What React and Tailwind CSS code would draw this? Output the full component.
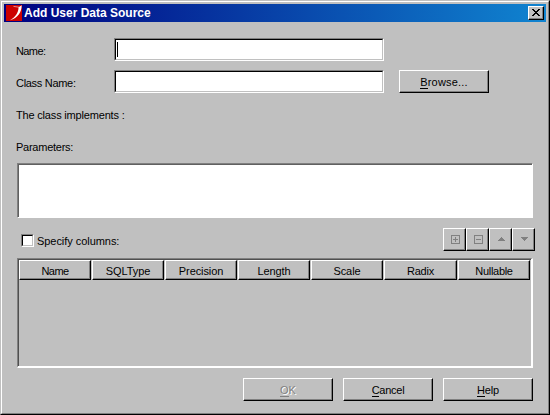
import React from "react";

const raised =
  "border border-t-white border-l-white border-r-black border-b-black shadow-[inset_-1px_-1px_0_#808080]";

function Label({ className = "", children }) {
  return <div className={`h-4 leading-4 whitespace-pre ${className}`}>{children}</div>;
}

function TextField({ focused }) {
  return (
    <div className="h-[23px] w-[270px] border border-t-[#808080] border-l-[#808080] border-r-white border-b-white bg-white">
      <div className="h-full border border-t-black border-l-black border-r-[#c0c0c0] border-b-[#c0c0c0] pt-[2px] pl-px">
        {focused && <div className="h-[15px] w-px bg-black" />}
      </div>
    </div>
  );
}

function Button({ hot, rest, disabled, className = "" }) {
  return (
    <button
      className={`flex h-[23px] w-[90px] items-center justify-center ${raised} ${className} ${
        disabled ? "text-[#808080] [text-shadow:1px_1px_0_#fff]" : "text-black"
      }`}
    >
      <span className="leading-[14px]">
        <span className={`inline-block h-[14px] border-b ${disabled ? "border-[#808080]" : "border-black"}`}>
          {hot}
        </span>
        {rest}
      </span>
    </button>
  );
}

function ToolButton({ children }) {
  return (
    <button className={`flex h-[23px] w-[23px] items-center pl-[7px] ${raised}`}>
      <svg width="9" height="9" viewBox="0 0 9 9" shapeRendering="crispEdges" fill="#808080">
        {children}
      </svg>
    </button>
  );
}

const columns = [
  ["Name", "w-[72px] tracking-[-0.6px]"],
  ["SQLType", "w-[72px] tracking-[-0.1px]"],
  ["Precision", "w-[72px] tracking-[-0.1px]"],
  ["Length", "w-[72px] tracking-[-0.1px]"],
  ["Scale", "w-[72px] tracking-[-0.1px]"],
  ["Radix", "w-[73px] tracking-[-0.2px]"],
  ["Nullable", "w-[72px] tracking-[-0.3px]"],
];

export default function App() {
  return (
    <div className="h-[415px] w-[550px] overflow-hidden border border-t-[#c0c0c0] border-l-[#c0c0c0] border-r-black border-b-black bg-[#c0c0c0] font-['Liberation_Sans',Arial,sans-serif] text-[11px] text-black">
      <div className="h-full border border-t-white border-l-white border-r-[#808080] border-b-[#808080] p-[2px]">
        <div className="flex h-[18px] items-center bg-linear-to-r/srgb from-[#000080] to-[#1084d0] pr-[2px] pl-[2px]">
          <svg width="16" height="16" viewBox="0 0 16 16" className="shrink-0">
            <rect width="16" height="16" fill="#cc0000" />
            <path d="M7.5 1.4 L13 2.2" stroke="#e99a9a" strokeWidth="0.9" fill="none" />
            <path d="M15.7 0.3 C15.6 7 12 13.2 4 15.3 C9.3 12 12.4 8 12.6 2.2 Z" fill="#fff" />
          </svg>
          <div className="pl-[2px] text-[12px] leading-[18px] font-bold whitespace-pre text-white">
            Add User Data Source
          </div>
          <button className={`ml-auto mb-px flex h-[14px] w-4 items-center justify-center bg-[#c0c0c0] ${raised}`}>
            <svg width="8" height="7" viewBox="0 0 8 7" shapeRendering="crispEdges">
              <path
                d="M0 0h2v1h1v1h2V1h1V0h2v1H7v1H6v1H5v1h1v1h1v1h1v1H6V6H5V5H3v1H2v1H0V6h1V5h1V4h1V3H2V2H1V1H0z"
                fill="#000"
              />
            </svg>
          </button>
        </div>

        <div className="pl-[13px] pt-4">
          <div className="flex h-[23px]">
            <Label className="-ml-px mt-[5px] w-[98px] tracking-[-0.6px]">Name:</Label>
            <TextField focused />
          </div>
          <div className="mt-[9px] flex h-[23px]">
            <Label className="-ml-px mt-[5px] w-[98px] tracking-[-0.3px]">Class Name:</Label>
            <TextField />
            <div className="ml-[15px]">
              <Button hot="B" rest="rowse..." className="tracking-[0.2px]" />
            </div>
          </div>
          <Label className="-ml-px mt-[14px] tracking-[-0.18px]">The class implements :</Label>
          <Label className="-ml-px mt-4 tracking-[-0.25px]">Parameters:</Label>
          <div className="mt-2 h-[55px] w-[516px] border border-t-[#808080] border-l-[#808080] border-r-white border-b-white bg-white">
            <div className="h-full border-t border-l border-[#606060]" />
          </div>

          <div className="flex pt-[10px]">
            <div className="mt-[6px] ml-1 h-[13px] w-[13px] border border-t-[#808080] border-l-[#808080] border-r-white border-b-white bg-white">
              <div className="h-full border border-t-black border-l-black border-r-[#c0c0c0] border-b-[#c0c0c0]" />
            </div>
            <Label className="mt-[5px] ml-[3px] w-[406px] tracking-[-0.05px]">Specify columns:</Label>
            <ToolButton>
              <path d="M0 0h9v9H0zM1 1v7h7V1zM4 2h1v2h2v1H5v2H4V5H2V4h2z" fillRule="evenodd" />
            </ToolButton>
            <ToolButton>
              <path d="M0 0h9v9H0zM1 1v7h7V1zM2 4h5v1H2z" fillRule="evenodd" />
            </ToolButton>
            <ToolButton>
              <path d="M4 2h1v1h1v1h1v1h1v1H1V5h1V4h1V3h1z" />
            </ToolButton>
            <ToolButton>
              <path d="M1 2h7v1H7v1H6v1H5v1H4V5H3V4H2V3H1z" />
            </ToolButton>
          </div>

          <div className="mt-[7px] h-[110px] w-[516px] border-t border-r-2 border-b-2 border-l border-t-[#808080] border-l-[#808080] border-r-white border-b-white">
            <div className="flex h-full gap-px border-t border-l border-[#505050]">
              {columns.map(([name, style]) => (
                <div
                  key={name}
                  className={`flex h-5 shrink-0 items-center justify-center pt-px leading-4 ${style} ${raised}`}
                >
                  {name}
                </div>
              ))}
            </div>
          </div>

          <div className="mt-[10px] ml-[226px] flex gap-[10px]">
            <Button hot="O" rest="K" disabled />
            <Button hot="C" rest="ancel" className="tracking-[-0.25px]" />
            <Button hot="H" rest="elp" className="tracking-[-0.2px]" />
          </div>
        </div>
      </div>
    </div>
  );
}
